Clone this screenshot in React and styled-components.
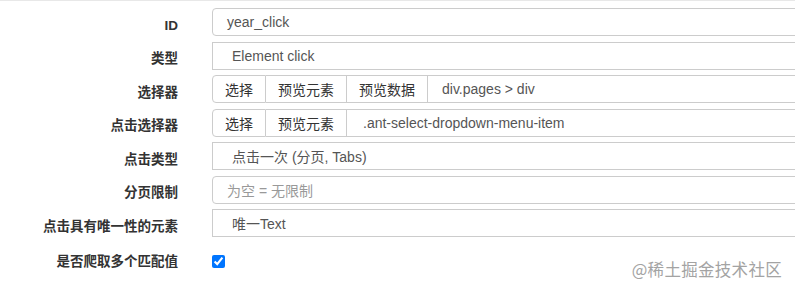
import React from "react";
import styled, { createGlobalStyle } from "styled-components";

const GlobalStyle = createGlobalStyle`
  body {
    margin: 0;
    background: #fff;
    overflow: hidden;
    font-family: "Liberation Sans", Arial, "Noto Sans CJK SC", sans-serif;
    font-size: 14px;
    color: #333;
  }
`;

function App() {
  return (
    <Page>
      <GlobalStyle />
      <Form>
        <Label>ID</Label>
        <Field $rounded>year_click</Field>

        <Label>类型</Label>
        <Field $pad={19}>Element click</Field>

        <Label>选择器</Label>
        <Group>
          <GroupButton>选择</GroupButton>
          <GroupButton>预览元素</GroupButton>
          <GroupButton>预览数据</GroupButton>
          <GroupField>div.pages &gt; div</GroupField>
        </Group>

        <Label>点击选择器</Label>
        <Group>
          <GroupButton>选择</GroupButton>
          <GroupButton>预览元素</GroupButton>
          <GroupField $pad={16}>.ant-select-dropdown-menu-item</GroupField>
        </Group>

        <Label>点击类型</Label>
        <Field $pad={19}>点击一次 (分页, Tabs)</Field>

        <Label>分页限制</Label>
        <Field $rounded $placeholder>为空 = 无限制</Field>

        <Label>点击具有唯一性的元素</Label>
        <Field $pad={19}>唯一Text</Field>

        <Label $check>是否爬取多个匹配值</Label>
        <CheckCell>
          <Check type="checkbox" defaultChecked />
        </CheckCell>
      </Form>
      <Watermark>@稀土掘金技术社区</Watermark>
    </Page>
  );
}

export default App;

const Page = styled.div`
  position: relative;
  height: 289px;
  box-sizing: border-box;
  border-top: 1px solid #e8e8e8;
  padding-top: 7px;
`;

const Form = styled.div`
  display: grid;
  grid-template-columns: 178px 640px;
  column-gap: 34px;
  row-gap: 5.5px;
`;

const Label = styled.div`
  text-align: right;
  font-weight: bold;
  font-size: 13.5px;
  color: #333;
  line-height: 20px;
  padding-top: ${(p) => (p.$check ? "9px" : "7.5px")};
  white-space: nowrap;
`;

const Field = styled.div`
  box-sizing: border-box;
  height: 28px;
  display: flex;
  align-items: center;
  padding-left: ${(p) => p.$pad || 14}px;
  border: 1px solid #ccc;
  border-radius: ${(p) => (p.$rounded ? "4px" : "0")};
  color: ${(p) => (p.$placeholder ? "#999" : "#555")};
  background: #fff;
  white-space: nowrap;
`;

const Group = styled.div`
  display: flex;
  height: 28px;
`;

const GroupButton = styled.div`
  box-sizing: border-box;
  height: 28px;
  display: flex;
  align-items: center;
  padding: 0 12px;
  border: 1px solid #ccc;
  border-left: none;
  background: #fff;
  color: #333;
  white-space: nowrap;

  &:first-child {
    border-left: 1px solid #ccc;
    border-radius: 4px 0 0 4px;
  }
`;

const GroupField = styled(Field)`
  flex: 1;
  border-left: none;
`;

const CheckCell = styled.div`
  display: flex;
  align-items: center;
  height: 28px;
  padding-top: 5px;
`;

const Check = styled.input`
  margin: 0;
  width: 13px;
  height: 13px;
  accent-color: #0075ff;
`;

const Watermark = styled.div`
  position: absolute;
  right: 13px;
  top: 256px;
  font-family: "Noto Sans CJK SC", sans-serif;
  font-size: 16.5px;
  letter-spacing: 0.3px;
  color: #a3a3a3;
`;
